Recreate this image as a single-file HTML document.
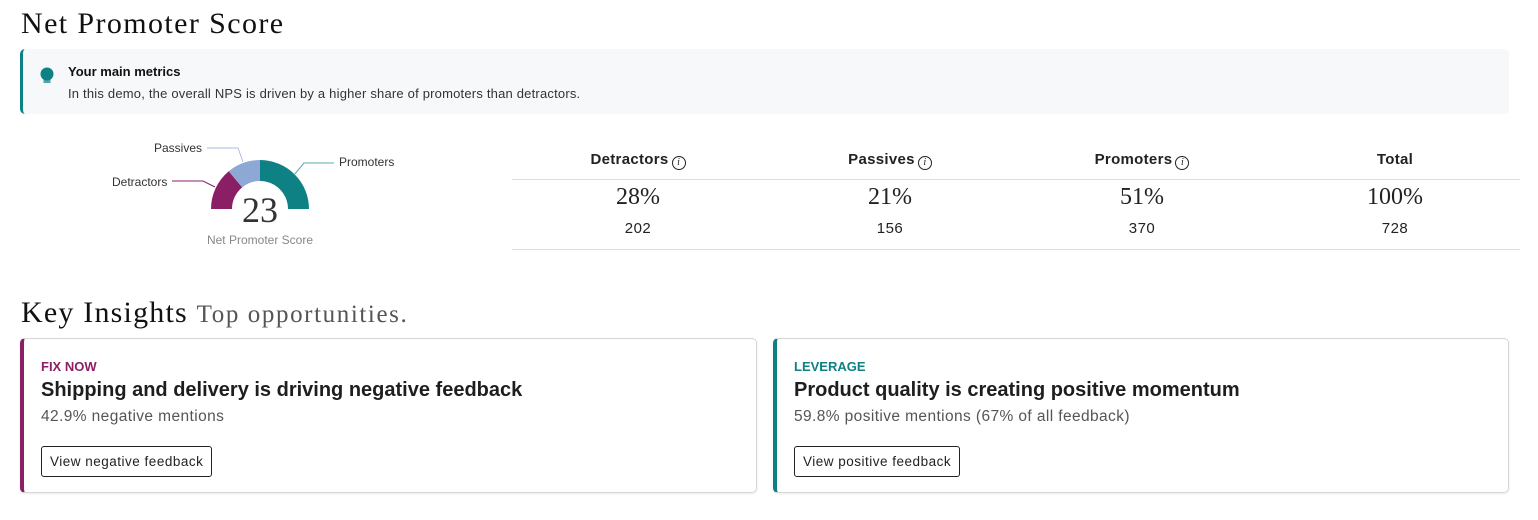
<!DOCTYPE html>
<html><head><style>
body{margin:0;width:1538px;height:520px;background:#fff;font-family:"Liberation Sans",sans-serif;position:relative;overflow:hidden;color:#222}
.a{position:absolute}
.serif{font-family:"Liberation Serif",serif}
.card{position:absolute;top:338px;height:155px;border:1px solid #d6d6d6;border-radius:5px;box-sizing:border-box;background:#fff;box-shadow:0 1px 2px rgba(0,0,0,.08)}
.card .tag{position:absolute;left:17px;top:20px;font-size:13px;font-weight:bold}
.card .t{position:absolute;left:17px;top:40px;font-size:20px;font-weight:bold;color:#1e1e1e}
.card .s{position:absolute;left:17px;top:69px;font-size:15.5px;color:#555;letter-spacing:.4px}
.card .b{position:absolute;left:17px;top:107px;height:31px;border:1px solid #222;border-radius:3px;font-size:13.5px;line-height:29px;padding:0 8px;box-sizing:border-box;letter-spacing:.5px}
.h{font-size:15px;font-weight:bold;text-align:center;width:200px;letter-spacing:.3px}
.p{font-size:24px;text-align:center;width:200px}
.n{font-size:15px;text-align:center;width:200px;letter-spacing:.5px}
.i{display:inline-block;width:14px;height:14px;border:1.3px solid #222;border-radius:50%;font-size:10px;font-style:italic;font-family:"Liberation Serif",serif;font-weight:normal;vertical-align:-1px;margin-left:3px;box-sizing:border-box;line-height:12px;letter-spacing:0}
</style></head><body>
<div class="a serif" style="left:21px;top:7px;font-size:30px;color:#111;letter-spacing:1.4px">Net Promoter Score</div>
<div class="a" style="left:20px;top:49px;width:1489px;height:65px;background:#f7f8fa;border-left:3px solid #0e8185;border-radius:5px;box-sizing:border-box"></div>
<svg class="a" style="left:38px;top:66px" width="18" height="20"><circle cx="9" cy="8" r="6.5" fill="#0e8185"/><rect x="5.5" y="13" width="7" height="4" fill="#0e8185" opacity=".7"/></svg>
<div class="a" style="left:68px;top:64px;font-size:13px;font-weight:bold;color:#111">Your main metrics</div>
<div class="a" style="left:68px;top:86px;font-size:13px;color:#333;letter-spacing:.2px">In this demo, the overall NPS is driven by a higher share of promoters than detractors.</div>

<svg class="a" style="left:0;top:0" width="520" height="260">
<path d="M211 209 A49 49 0 0 1 228.8 171.2 L242.2 187.4 A28 28 0 0 0 232 209Z" fill="#8b1f66"/>
<path d="M228.8 171.2 A49 49 0 0 1 260 160 L260 181 A28 28 0 0 0 242.2 187.4Z" fill="#8ea8d6"/>
<path d="M260 160 A49 49 0 0 1 309 209 L288 209 A28 28 0 0 0 260 181Z" fill="#0e8185"/>
<polyline points="172,181 203,181 215,187" fill="none" stroke="#8b1f66" stroke-width="1"/>
<polyline points="207,148 238,148 243,162" fill="none" stroke="#a9bde0" stroke-width="1"/>
<polyline points="294,175 304,163 334,163" fill="none" stroke="#5aabae" stroke-width="1"/>
<text x="112" y="186" font-size="12" fill="#333" font-family="Liberation Sans">Detractors</text>
<text x="154" y="152" font-size="12" fill="#333" font-family="Liberation Sans">Passives</text>
<text x="339" y="166" font-size="12" fill="#333" font-family="Liberation Sans">Promoters</text>
<text x="260" y="222" font-size="36" fill="#333" text-anchor="middle" font-family="Liberation Serif">23</text>
<text x="260" y="244" font-size="12" fill="#888" text-anchor="middle" font-family="Liberation Sans">Net Promoter Score</text>
</svg>

<div class="a" style="left:512px;top:179px;width:1008px;height:1px;background:#ddd"></div>
<div class="a" style="left:512px;top:249px;width:1008px;height:1px;background:#ddd"></div>
<div class="a h" style="left:538px;top:151px">Detractors<span class="i">i</span></div>
<div class="a h" style="left:790px;top:151px">Passives<span class="i">i</span></div>
<div class="a h" style="left:1042px;top:151px">Promoters<span class="i">i</span></div>
<div class="a h" style="left:1295px;top:151px">Total</div>
<div class="a p serif" style="left:538px;top:184px">28%</div>
<div class="a p serif" style="left:790px;top:184px">21%</div>
<div class="a p serif" style="left:1042px;top:184px">51%</div>
<div class="a p serif" style="left:1295px;top:184px">100%</div>
<div class="a n" style="left:538px;top:220px">202</div>
<div class="a n" style="left:790px;top:220px">156</div>
<div class="a n" style="left:1042px;top:220px">370</div>
<div class="a n" style="left:1295px;top:220px">728</div>

<div class="a serif" style="left:21px;top:296px;font-size:30px;color:#111;letter-spacing:1.2px">Key Insights <span style="font-size:25px;color:#555;letter-spacing:1.6px">Top opportunities.</span></div>
<div class="card" style="left:20px;width:737px;border-left:4px solid #8b1f66">
<div class="tag" style="color:#8b1f66">FIX NOW</div>
<div class="t">Shipping and delivery is driving negative feedback</div>
<div class="s">42.9% negative mentions</div>
<div class="b">View negative feedback</div></div>
<div class="card" style="left:773px;width:736px;border-left:4px solid #0e8185">
<div class="tag" style="color:#0e8185">LEVERAGE</div>
<div class="t">Product quality is creating positive momentum</div>
<div class="s">59.8% positive mentions (67% of all feedback)</div>
<div class="b">View positive feedback</div></div>
</body></html>
